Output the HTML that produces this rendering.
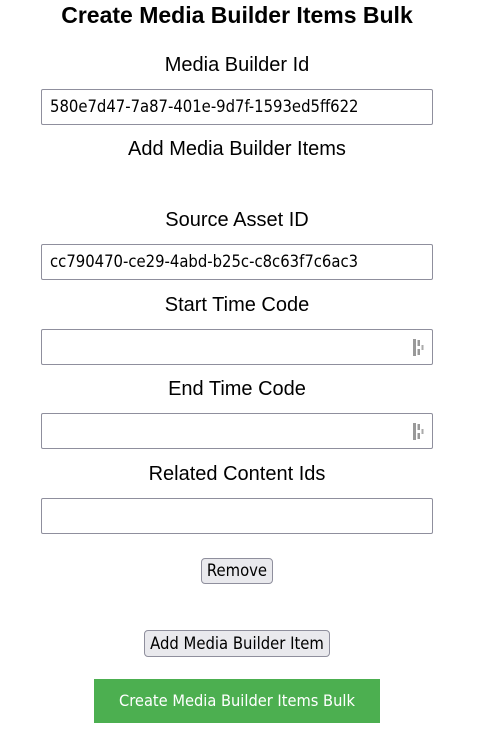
<!DOCTYPE html>
<html><head><style>
body{margin:0;width:497px;height:732px;background:#fff;font-family:"Liberation Sans",Arial,sans-serif;position:relative;overflow:hidden;color:#000}
.a{position:absolute;left:0;width:474px;text-align:center}
h1{position:absolute;left:0;width:474px;text-align:center;margin:0;top:2px;font-size:23px;font-weight:bold;white-space:nowrap}
.l{font-size:20px}
.i{position:absolute;left:41px;border:1px solid #8f8f9d;border-radius:2px;box-sizing:border-box;width:392px;height:36px;font-size:16.5px;line-height:34px;padding-left:8px;font-family:"DejaVu Sans Condensed","Liberation Sans",sans-serif}
.ic{position:absolute;right:5px;top:8px;width:16px;height:19px}
.b{position:absolute;background:#e9e9ed;border:1px solid #8f8f9d;border-radius:4px;box-sizing:border-box;font-size:16.5px;text-align:center;font-family:"DejaVu Sans Condensed","Liberation Sans",sans-serif;white-space:nowrap}
.g{position:absolute;left:94px;top:679px;width:286px;height:44px;background:#4caf50;color:#fff;font-size:16.3px;text-align:center;line-height:44px;font-family:"DejaVu Sans Condensed","Liberation Sans",sans-serif}
</style></head><body>
<h1>Create Media Builder Items Bulk</h1>
<div class="a l" style="top:54px">Media Builder Id</div>
<div class="i" style="top:89px">580e7d47-7a87-401e-9d7f-1593ed5ff622</div>
<div class="a l" style="top:138px">Add Media Builder Items</div>
<div class="a l" style="top:209px">Source Asset ID</div>
<div class="i" style="top:244px">cc790470-ce29-4abd-b25c-c8c63f7c6ac3</div>
<div class="a l" style="top:294px">Start Time Code</div>
<div class="i" style="top:329px"><svg class="ic" viewBox="0 0 16 19"><rect x="2" y="1" width="3" height="17" fill="#999"/><rect x="6.5" y="2" width="2.5" height="6" fill="#999"/><rect x="6.5" y="11" width="2.5" height="6" fill="#999"/><rect x="10.5" y="7" width="2" height="5" fill="#aaa"/></svg></div>
<div class="a l" style="top:378px">End Time Code</div>
<div class="i" style="top:413px"><svg class="ic" viewBox="0 0 16 19"><rect x="2" y="1" width="3" height="17" fill="#999"/><rect x="6.5" y="2" width="2.5" height="6" fill="#999"/><rect x="6.5" y="11" width="2.5" height="6" fill="#999"/><rect x="10.5" y="7" width="2" height="5" fill="#aaa"/></svg></div>
<div class="a l" style="top:463px">Related Content Ids</div>
<div class="i" style="top:498px"></div>
<div class="b" style="left:201px;top:558px;width:72px;height:26px;line-height:24px">Remove</div>
<div class="b" style="left:144px;top:630px;width:186px;height:27px;line-height:25px">Add Media Builder Item</div>
<div class="g">Create Media Builder Items Bulk</div>
</body></html>
